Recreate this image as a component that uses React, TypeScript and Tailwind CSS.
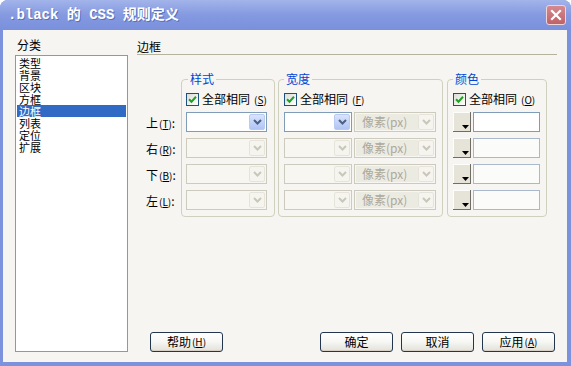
import React from 'react';

const cjk = "font-['Noto_Sans_CJK_SC','Liberation_Sans',sans-serif]";

function Key({ k }: { k: string }) {
    return (
        <span className="text-[10px] ml-[1px]">
            (<span className="underline">{k}</span>)
        </span>
    );
}

function Chevron({ color }: { color: string }) {
    return (
        <svg width="9" height="6" viewBox="0 0 9 6">
            <path d="M1 1 L4.5 4.5 L8 1" stroke={color} strokeWidth="2" fill="none" />
        </svg>
    );
}

function Combo({ w, active, text }: { w: string; active?: boolean; text?: string }) {
    return (
        <div
            className={`${w} h-[20px] flex items-stretch border p-[1px] ${
                active ? 'border-[#7F9DB9] bg-white' : 'border-[#CDCBBE] bg-[#F7F6F1]'
            }`}
        >
            <div
                className={`flex-1 flex items-center pl-[6px] text-[12px] text-[#ACA899] ${
                    text ? 'bg-[#ECEBE2]' : ''
                }`}
            >
                {text}
            </div>
            {active ? (
                <div className="w-[16px] rounded-[2px] border border-[#B9CBF3] bg-gradient-to-b from-[#D9E4FD] to-[#B0C5F4] flex items-center justify-center">
                    <Chevron color="#4D6185" />
                </div>
            ) : (
                <div className="w-[16px] rounded-[2px] border border-[#E6E4DA] bg-[#F5F4EF] flex items-center justify-center">
                    <Chevron color="#C9C7BA" />
                </div>
            )}
        </div>
    );
}

function Check({ k }: { k: string }) {
    return (
        <div className="flex items-center h-[14px] gap-[3px] text-[12px]">
            <span className="w-[13px] h-[13px] border border-[#1C5180] bg-gradient-to-br from-[#DCDCD7] to-white flex items-center justify-center">
                <svg width="9" height="9" viewBox="0 0 9 9">
                    <path d="M1 4.2 L3.5 6.7 L8 1.8" stroke="#21A121" strokeWidth="2" fill="none" />
                </svg>
            </span>
            <span>全部相同</span>
            <Key k={k} />
        </div>
    );
}

function ColorPick() {
    return (
        <div className="w-[18px] h-[20px] border-r border-b border-[#6F6D64] bg-[#E6E4D8]">
            <div className="w-full h-full border-t border-l border-[#FDFDFB] flex items-end justify-end pr-[1px] pb-[2px]">
                <svg width="7" height="4" viewBox="0 0 7 4">
                    <path d="M0 0 H7 L3.5 4 Z" fill="#000" />
                </svg>
            </div>
        </div>
    );
}

function Btn({ children }: { children: React.ReactNode }) {
    return (
        <button className="h-[20px] w-[73px] rounded-[3px] border border-[#22364F] bg-gradient-to-b from-white via-[#F6F6F3] to-[#E2E1DA] shadow-[inset_0_-1px_0_#D6D0C5] text-[12px] leading-none flex items-center justify-center">
            {children}
        </button>
    );
}

export default function App() {
    const cats = ['类型', '背景', '区块', '方框', '边框', '列表', '定位', '扩展'];
    const sides = [
        { t: '上', k: 'T' },
        { t: '右', k: 'R' },
        { t: '下', k: 'B' },
        { t: '左', k: 'L' },
    ];
    const rows = [0, 1, 2, 3];

    return (
        <div className={`w-[571px] h-[366px] bg-white ${cjk} text-black`}>
            <div className="w-full h-full flex flex-col rounded-t-[8px] bg-[#7D92DC] overflow-hidden">
                {/* Title bar */}
                <div className="h-[30px] flex items-center justify-between pl-[8px] pr-[5px] bg-gradient-to-b from-[#A3B4EA] via-[#8499E0] to-[#7A90DC]">
                    <div className="text-white font-bold text-[14px] font-['Liberation_Mono','Noto_Sans_CJK_SC',monospace] [text-shadow:1px_1px_0_#5A6FB8] whitespace-pre">
                        .black 的 CSS 规则定义
                    </div>
                    <div className="w-[20px] h-[20px] rounded-[3px] border border-[#F0D4D6] bg-gradient-to-b from-[#D48A8F] to-[#BE6269] flex items-center justify-center">
                        <svg width="12" height="12" viewBox="0 0 12 12">
                            <path d="M2 2 L10 10 M10 2 L2 10" stroke="#fff" strokeWidth="2.2" strokeLinecap="square" />
                        </svg>
                    </div>
                </div>

                {/* Body */}
                <div className="flex-1 ml-[3px] mr-[4px] mb-[4px] bg-[#F6F5F1] flex pt-[8px] pl-[12px] pr-[10px] pb-[10px] gap-[9px]">
                    {/* Category list */}
                    <div className="w-[113px] flex flex-col">
                        <div className="h-[17px] text-[12px] leading-[14px] pl-[2px]">分类</div>
                        <div className="flex-1 border border-[#7F9DB9] bg-white pt-[1px] px-[1px]">
                            {cats.map((c, i) => (
                                <div
                                    key={c}
                                    className={`h-[12px] text-[11px] leading-[12px] pl-[2px] ${
                                        i === 4 ? 'bg-[#316AC5] text-white' : ''
                                    }`}
                                >
                                    {c}
                                </div>
                            ))}
                        </div>
                    </div>

                    {/* Right panel */}
                    <div className="flex-1 flex flex-col">
                        <div className="h-[17px] border-b border-[#B5B2A0] text-[12px] leading-[14px] pt-[2px]">边框</div>

                        <div className="flex mt-[17px] pl-[9px]">
                            <div className="w-[35px] pt-[41px] flex flex-col gap-[6px] text-[12px]">
                                {sides.map((s) => (
                                    <div key={s.k} className="h-[20px] flex items-center">
                                        {s.t}
                                        <Key k={s.k} />:
                                    </div>
                                ))}
                            </div>

                            <fieldset className="w-[94px] border border-[#D0D0BF] rounded-[4px]">
                                <legend className="ml-[6px] px-[2px] text-[12px] leading-[14px] text-[#0046D5]">样式</legend>
                                <div className="pl-[4px] pt-[6px] pb-[6px] flex flex-col gap-[6px]">
                                    <Check k="S" />
                                    {rows.map((r) => (
                                        <Combo key={r} w="w-[81px]" active={r === 0} />
                                    ))}
                                </div>
                            </fieldset>

                            <fieldset className="ml-[3px] w-[165px] border border-[#D0D0BF] rounded-[4px]">
                                <legend className="ml-[5px] px-[2px] text-[12px] leading-[14px] text-[#0046D5]">宽度</legend>
                                <div className="pl-[5px] pt-[6px] pb-[6px] flex flex-col gap-[6px]">
                                    <Check k="F" />
                                    {rows.map((r) => (
                                        <div key={r} className="flex gap-[2px]">
                                            <Combo w="w-[68px]" active={r === 0} />
                                            <Combo w="w-[82px]" text="像素(px)" />
                                        </div>
                                    ))}
                                </div>
                            </fieldset>

                            <fieldset className="ml-[4px] w-[100px] border border-[#D0D0BF] rounded-[4px]">
                                <legend className="ml-[5px] px-[2px] text-[12px] leading-[14px] text-[#0046D5]">颜色</legend>
                                <div className="pl-[5px] pt-[6px] pb-[6px] flex flex-col gap-[6px]">
                                    <Check k="O" />
                                    {rows.map((r) => (
                                        <div key={r} className="flex gap-[2px]">
                                            <ColorPick />
                                            <div
                                                className={`w-[67px] h-[20px] border ${
                                                    r === 0 ? 'border-[#7F9DB9] bg-white' : 'border-[#A9B8CC] bg-[#FBFBF9]'
                                                }`}
                                            />
                                        </div>
                                    ))}
                                </div>
                            </fieldset>
                        </div>

                        {/* Buttons */}
                        <div className="mt-auto flex items-center pl-[13px] pr-[2px]">
                            <Btn>
                                帮助
                                <Key k="H" />
                            </Btn>
                            <div className="flex-1" />
                            <div className="flex gap-[8px]">
                                <Btn>确定</Btn>
                                <Btn>取消</Btn>
                                <Btn>
                                    应用
                                    <Key k="A" />
                                </Btn>
                            </div>
                        </div>
                    </div>
                </div>
            </div>
        </div>
    );
}
